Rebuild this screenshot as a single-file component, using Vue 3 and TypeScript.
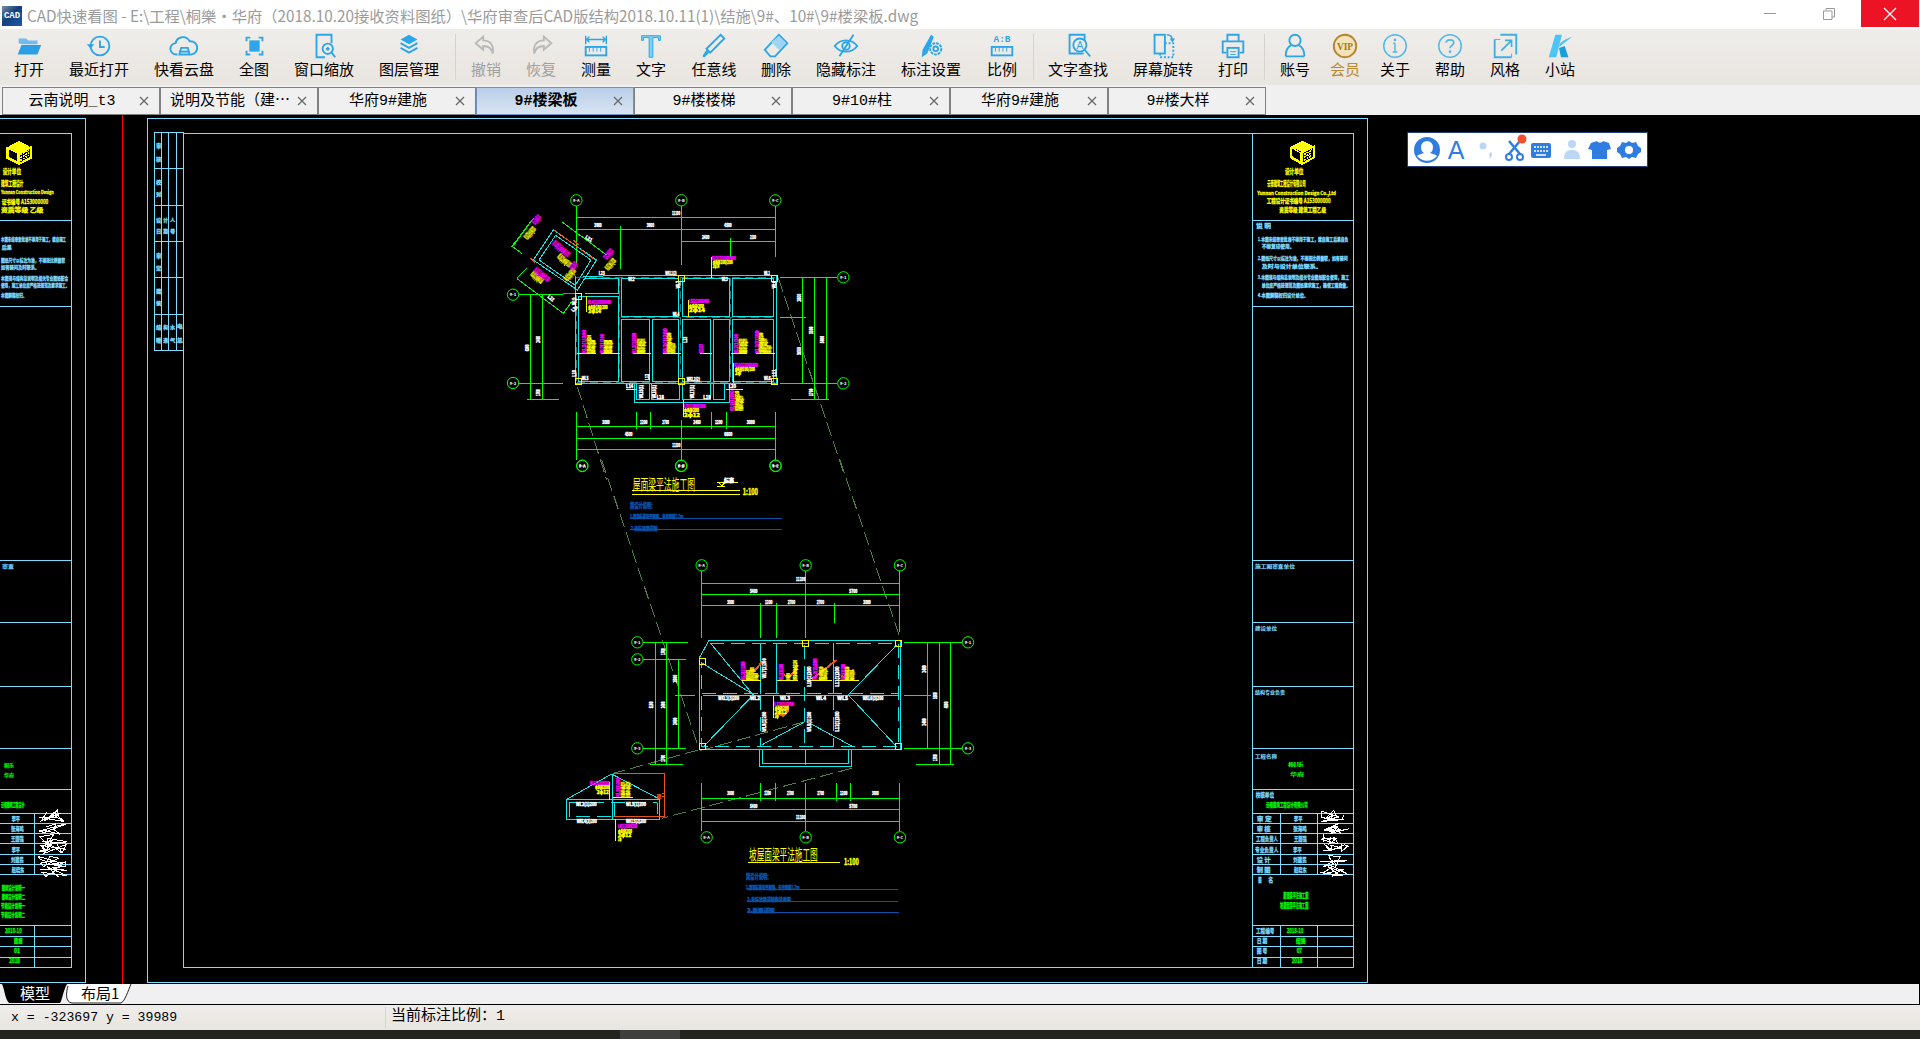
<script setup lang="ts">
import { computed } from 'vue'

const A = '#2ba6e8'
const S = `fill="none" stroke="${A}" stroke-width="2"`
const GY = '#b9b9b9'
const icons: Record<string, string> = {
  open: `<path d="M5 13V8h8l2 2h10v4H9z" fill="#6fbdf0"/><path d="M4 25l4-10h21l-4 10z" fill="#2b9fe6"/>`,
  recent: `<circle cx="17" cy="16" r="10" ${S}/><path d="M17 10v7h5" ${S}/><path d="M3 14h8l-4 5z" fill="${A}"/>`,
  cloud: `<path d="M9 25h-1a6 6 0 0 1-1-12 8 8 0 0 1 15-2 7 7 0 0 1 2 14h-1" ${S}/><path d="M11 25l2-7h7l2 7z" ${S}/><path d="M11 22h11" ${S}/>`,
  full: `<rect x="11" y="10" width="11" height="12" fill="${A}"/><path d="M8 11V7h4M21 7h4v4M25 21v4h-4M12 25H8v-4" ${S}/>`,
  zoom: `<path d="M24 13V4H8v24h9" ${S}/><circle cx="20" cy="19" r="5.500" ${S}/><path d="M24 23l4 5M18 19h4M20 17v4" ${S}/>`,
  layer: `<path d="M16 4l9 5-9 5-9-5z" fill="${A}"/><path d="M7 13l9 5 9-5M7 18l9 5 9-5" ${S} stroke-width="2.500"/>`,
  undo: `<path d="M13 6L5 13l8 7v-4c6 0 9 2 10 8 2-9-3-14-10-14z" fill="none" stroke="${GY}" stroke-width="2"/>`,
  redo: `<path d="M19 6l8 7-8 7v-4c-6 0-9 2-10 8-2-9 3-14 10-14z" fill="none" stroke="${GY}" stroke-width="2"/>`,
  measure: `<path d="M5 5v9M27 5v9M6 9h20M9 6l-3 3 3 3M23 6l3 3-3 3" fill="none" stroke="${A}" stroke-width="1.500"/><rect x="5" y="17" width="22" height="9" ${S}/><path d="M9 18v4M13 18v4M17 18v4M21 18v4" stroke="${A}"/>`,
  text: `<path d="M6 5h20v5h-2V7h-6v21h-4V7H8v3H6z" fill="#7cd0f5" stroke="${A}"/>`,
  pencil: `<path d="M23 4l4 4-15 15-4-4z" fill="none" stroke="${A}" stroke-width="2"/><path d="M8 20l3 3-5 5c-2 0-2-1-2-2z" fill="${A}"/>`,
  eraser: `<path d="M19 4l9 9-13 14H10L4 20z" ${S}/><path d="M19 5l8 8-8 7-8-8z" fill="#9fd4f2"/>`,
  eye: `<path d="M4 16c6-8 18-8 24 0-6 8-18 8-24 0z" ${S}/><circle cx="16" cy="16" r="4" ${S}/><path d="M24 4L9 27" ${S}/>`,
  mark: `<path d="M16 4l3 2-7 18-6 4 1-8z" fill="${A}"/><circle cx="21" cy="19" r="6" ${S} stroke-dasharray="3 1"/><circle cx="21" cy="19" r="2.500" ${S} stroke-width="1.500"/>`,
  ratio: `<text x="16" y="12" text-anchor="middle" font-family="Liberation Mono" font-weight="700" font-size="10" fill="${A}">A:B</text><rect x="5" y="17" width="22" height="9" ${S}/><path d="M9 18v4M13 18v4M17 18v4M21 18v4" stroke="${A}"/>`,
  find: `<path d="M22 24H7V4h16v8" ${S}/><circle cx="18" cy="15" r="7" fill="#eeece8" stroke="${A}" stroke-width="2"/><text x="18" y="19" text-anchor="middle" font-family="Liberation Sans" font-size="11" fill="${A}">A</text><path d="M23 20l6 7" ${S}/>`,
  rotate: `<rect x="7" y="4" width="11" height="20" ${S}/><path d="M18 13h9v15H13v-4" fill="none" stroke="${A}" stroke-width="2" stroke-dasharray="2 2"/><path d="M20 4c4 0 6 2 6 6M24 8l2 3 2-3" fill="none" stroke="${A}" stroke-width="1.500"/>`,
  print: `<path d="M10 11V4h12v7" ${S}/><path d="M9 23H5V11h22v12h-4" ${S} stroke-width="2.500"/><rect x="10" y="18" width="12" height="10" ${S}/><path d="M13 22h6M13 25h6" stroke="${A}"/>`,
  user: `<circle cx="16" cy="10" r="6" ${S}/><path d="M6 27c0-8 4-11 6-12M26 27c0-8-4-11-6-12M6 27h20" ${S}/>`,
  vip: `<circle cx="16" cy="16" r="12" fill="#f3e3b8" stroke="#b5862d" stroke-width="2"/><text x="16" y="20" text-anchor="middle" font-family="Liberation Serif" font-weight="700" font-size="10" fill="#a8741f">VIP</text>`,
  info: `<circle cx="16" cy="16" r="12" fill="none" stroke="#55b8e6" stroke-width="1.600"/><path d="M16 13v9M13.500 22.500h5M14 13h2" stroke="#55b8e6" stroke-width="1.600"/><circle cx="16" cy="9.500" r="1.400" fill="#55b8e6"/>`,
  help: `<circle cx="16" cy="16" r="12" fill="none" stroke="#55b8e6" stroke-width="1.600"/><path d="M12 12.500c0-4 8-4 8 0 0 3-4 3-4 6" fill="none" stroke="#55b8e6" stroke-width="1.800"/><circle cx="16" cy="22" r="1.400" fill="#55b8e6"/>`,
  style: `<path d="M11 4h17v21M5 9v19h18" fill="none" stroke="#3fb0e4" stroke-width="2"/><path d="M5 9h6M23 28v-4" stroke="#3fb0e4"/><path d="M12 21l11-11M16 10h7v7" fill="none" stroke="#3fb0e4" stroke-width="1.800"/>`,
  k: `<path d="M11 4h7L12 28H4z" fill="#4cc4f5"/><path d="M15 17L29 6c-5 2-9 3-13 7z" fill="#4cc4f5"/><path d="M15 18l6-2 4 12h-8z" fill="#1a9fdc"/>`,
}

type Entry = { label?: string; c: number; icon?: string; cls?: string; sep?: boolean }
const entries: Entry[] = [
  { label: '打开', c: 29, icon: 'open' }, { label: '最近打开', c: 99, icon: 'recent' },
  { label: '快看云盘', c: 184, icon: 'cloud' }, { label: '全图', c: 254, icon: 'full' },
  { label: '窗口缩放', c: 324, icon: 'zoom' }, { label: '图层管理', c: 409, icon: 'layer' },
  { c: 455, sep: true },
  { label: '撤销', c: 486, icon: 'undo', cls: 'off' }, { label: '恢复', c: 541, icon: 'redo', cls: 'off' },
  { label: '测量', c: 596, icon: 'measure' }, { label: '文字', c: 651, icon: 'text' },
  { label: '任意线', c: 714, icon: 'pencil' }, { label: '删除', c: 776, icon: 'eraser' },
  { label: '隐藏标注', c: 846, icon: 'eye' }, { label: '标注设置', c: 931, icon: 'mark' },
  { label: '比例', c: 1002, icon: 'ratio' },
  { c: 1033, sep: true },
  { label: '文字查找', c: 1078, icon: 'find' }, { label: '屏幕旋转', c: 1163, icon: 'rotate' },
  { label: '打印', c: 1233, icon: 'print' },
  { c: 1264, sep: true },
  { label: '账号', c: 1295, icon: 'user' }, { label: '会员', c: 1345, icon: 'vip', cls: 'gold' },
  { label: '关于', c: 1395, icon: 'info' }, { label: '帮助', c: 1450, icon: 'help' },
  { label: '风格', c: 1505, icon: 'style' }, { label: '小站', c: 1560, icon: 'k' },
]
const toolbar = computed(() => {
  let cur = 0
  return entries.map((e) => {
    const w = e.sep ? 1 : Math.max(32, (e.label as string).length * 15)
    const ml = e.c - w / 2 - cur
    cur = e.c + w / 2
    return { ...e, svg: e.icon ? icons[e.icon] : '', box: { width: w + 'px', marginLeft: ml + 'px' } }
  })
})

const tabs = ['云南说明_t3', '说明及节能（建⋯', '华府9#建施', '9#楼梁板', '9#楼楼梯', '9#10#柱', '华府9#建施', '9#楼大样']

const G = '#00ff00', C = '#14e6e6', W = '#ffffff', Y = '#ffff00', M = '#ff00ff', B = '#0a52a8', F = '#7fdcff', O = '#e8561a', D = '#4f7f45'

type Lab = [number, number, number, string, string, number?, number?]
type P = { c: string; d: string; w?: number; dash?: string }
type Group = { t: string; paths: P[]; labs: Lab[]; bub?: [number, number, string][]; sq?: [number, number][]; heavy: number }

function cluster(base: number, items: [number, number, string][], size = 15): Lab[] {
  return items.map(([x, l, c]) => [x, base, l, c === M ? 'KL2(1)200' : 'HRB400φ8@200', c, size, -90] as Lab)
}

const plan1: Group = {
  t: 'translate(490 180) scale(.33333)',
  heavy: 1.5,
  paths: [
    { c: D, dash: '14 5', d: 'M262 620L350 900M865 295L1065 890' },
    { c: G, d: 'M259 78V250M574 78V255M856 78V232M259 112H856M259 148H856M574 184H856M391 138V268M721 174V235M88 343H218M88 610H218M122 343V660M157 343V660M110 660H207M870 292H1042M870 610H1042M870 412H947M937 292V610M973 292V660M1009 292V660M903 660H1017M259 695V840M574 720V840M856 695V840M259 740H856M259 775H856M259 808H856M439 695V748M481 695V748M664 695V748M709 695V748M130 115L68 200L95 220M215 125L350 225M80 295L110 265M80 295L220 400L245 365M130 115L65 200' },
    { c: C, d: 'M256 288V612H860V288H340L280 290M266 350H386V605H266ZM285 295H386V340H285M395 295H567V410H395ZM395 418H480V605H395ZM487 418H567V605H487ZM577 297H718V410H577ZM577 418H662V605H577ZM670 418H718V605H670ZM727 295H852V410H727ZM727 418H852V605H727ZM433 612V667H718V612M440 612V658H478V612M485 612V658H570V612M577 612V658H662V612M670 612V658H705V612M190 150L320 240L262 330L130 240ZM197 166L303 240L256 316L147 240Z' },
    { c: '#3f6f6f', dash: '8 5', d: 'M261 345V610M390 295V610M572 295V610M722 295V610M258 292H856M393 414H856M260 608H856' },
    { c: O, d: 'M190 148L318 242M218 340H258M250 180L266 195M122 235L136 248' },
    { c: Y, d: 'M664 232V295M290 347V397M595 360V412M730 548V608M580 660V712M262 520H318M332 520H390M430 520H482M520 520H572M630 520H665M724 520H772M798 520H856M708 630H758M408 630H440' },
  ],
  sq: [[265, 349], [574, 295], [853, 295], [265, 604], [574, 604], [853, 604]],
  bub: [[259, 61, '9-A'], [574, 61, '9-B'], [856, 61, '9-C'], [277, 857, '9-A'], [574, 857, '9-B'], [856, 857, '9-C'], [69, 344, '9-1'], [69, 609, '9-2'], [1060, 292, '9-1'], [1060, 610, '9-2']],
  labs: [
    [546, 106, 24, '11100', W], [313, 141, 22, '3900', W], [470, 141, 22, '3900', W], [703, 141, 22, '4500', W], [636, 176, 22, '2400', W], [780, 176, 18, '2100', W],
    [934, 365, 24, '1800', W, 15, -90], [968, 462, 22, '3300', W, 15, -90], [1002, 490, 22, '5400', W, 15, -90], [933, 525, 24, '3600', W, 15, -90], [968, 648, 22, '1700', W, 15, -90],
    [150, 488, 20, '2400', W, 15, -90], [116, 514, 20, '6300', W, 15, -90], [150, 648, 20, '1700', W, 15, -90],
    [337, 733, 22, '3000', W], [450, 733, 22, '1200', W], [517, 733, 20, '2700', W], [610, 733, 22, '2400', W], [675, 733, 22, '1200', W], [770, 733, 24, '3000', W], [405, 768, 22, '4500', W], [703, 768, 24, '6600', W], [547, 802, 24, '11100', W],
    [526, 285, 34, 'WKL1(2)', W], [822, 285, 18, 'WL1', W], [415, 304, 18, 'WL2', W], [695, 304, 18, 'WL3', W], [548, 407, 20, 'WL4', W], [590, 602, 40, 'WKL2(2)', W], [275, 600, 20, 'WL5', W], [822, 600, 20, 'WL6', W], [570, 325, 22, 'WL7', W, 15, -90], [858, 325, 22, 'WL8', W, 15, -90], [258, 375, 22, 'WL9', W, 15, -90], [258, 590, 20, 'L10', W, 15, -90], [858, 590, 22, 'L11', W, 15, -90], [478, 600, 18, 'L12', W, 15, -90], [590, 488, 18, 'L13', W, 15, -90],
    [408, 625, 22, 'L14', W], [460, 655, 40, 'WL15(1)', W, 15, -90], [498, 655, 40, 'WL16(1)', W, 15, -90], [612, 655, 40, 'WL17(1)', W, 15, -90], [500, 656, 22, 'L18', W], [640, 656, 22, 'L19', W], [716, 625, 22, 'L20', W], [284, 175, 22, 'L21', W, 15, 30], [172, 352, 20, 'L22', W, 15, 40], [326, 285, 18, 'L23', W], [250, 397, 20, 'L24', W, 15, -45],
    [665, 240, 72, 'KL3(2)200X400', M], [668, 252, 60, 'φ8@100/200', Y], [668, 265, 20, '2φ14', Y],
    [293, 372, 70, 'KL4(1)200X400', M], [295, 386, 58, 'φ8@100/200', Y], [295, 400, 38, '2φ14', Y],
    [597, 370, 60, 'L5(2)200X400', M], [597, 383, 45, 'φ8@200', Y], [597, 397, 48, '2φ14', Y],
    [733, 560, 70, 'KL6(1)200X400', M], [735, 572, 60, 'φ8@100/200', Y], [735, 585, 18, '2φ', Y],
    [582, 685, 65, 'L7(1)200X300', M], [582, 697, 45, 'φ8@200', Y], [582, 710, 48, '2φ12', Y],
    ...cluster(520, [[288, 70, M], [302, 55, Y], [314, 40, Y]]), ...cluster(520, [[342, 58, M], [355, 40, Y], [367, 40, Y]]), ...cluster(520, [[439, 62, M], [452, 45, Y], [464, 45, Y]]), ...cluster(520, [[530, 75, M], [542, 62, Y], [554, 30, Y]]), ...cluster(520, [[640, 28, M]]), ...cluster(520, [[745, 58, M], [760, 45, Y], [770, 45, Y]]), ...cluster(520, [[808, 68, M], [820, 62, Y], [832, 45, Y], [844, 25, Y]]),
    ...cluster(692, [[733, 60, M], [747, 60, Y], [758, 45, Y]]),
    ...([[135, 135, M, 30, -50], [112, 180, Y, 42, -50], [185, 192, M, 62, 40], [200, 232, Y, 48, 40], [120, 285, Y, 42, 40], [130, 272, M, 55, 40], [232, 305, Y, 42, -50], [248, 272, M, 26, -50], [355, 272, Y, 38, -50], [350, 240, M, 34, -50]] as [number, number, string, number, number][]).map(([x, y, c, l, r]) => [x, y, l, 'KL8(2)φ8@100', c, 22, r] as Lab),
  ],
}

const plan2: Group = {
  t: 'translate(550 460) scale(.33333)',
  heavy: 1.5,
  paths: [
    { c: D, dash: '14 5', d: 'M155 0L445 860M870 0L1052 540M445 870L190 940M765 785L450 872M905 925L335 1075' },
    { c: G, d: 'M454 333V535M767 333V535M1050 333V515M454 370H1050M454 403H1050M454 438H1050M631 430V535M679 430V535M853 430V488M280 547H414M280 598H408M280 865H408M316 547V915M350 547V915M385 598V865M300 915H398M375 706H436M1062 547H1236M1062 865H1236M1062 706H1142M1132 547V865M1168 547V915M1202 547V915M1098 915H1212M454 968V1114M767 968V1114M1050 968V1114M454 1015H1050M454 1048H1050M454 1084H1050M631 968V1022M676 968V1022M859 968V1022M901 968V1022' },
    { c: C, d: 'M476 543H1052V868H450V590ZM630 868V920H905V868M638 868V912H897V868M767 868V915M680 550V702M632 550V702M852 550V702M458 707H1045M50 1018L185 942L330 1018V1078H50ZM50 1018H330M188 942V1078' },
    { c: C, dash: '14 7', d: 'M480 550H1046V860H456V605M456 700H1046M632 708V860M764 556V860M852 708V860M58 1028V1070H322V1028M58 1028H322M195 1030V1070' },
    { c: C, d: 'M482 550L610 705M457 610L605 700M1040 555L895 705M460 860L605 710M1040 860L895 705M635 855L765 785M780 790L905 858' },
    { c: O, w: 6, d: 'M600 628L615 632L636 605M702 645L718 652L742 625M785 658L860 600M875 648L892 655L910 628M685 760L700 768L716 750' },
    { c: O, d: 'M190 942H345V1070H190M335 1000H345M335 1010H345' },
    { c: Y, d: 'M247 93H570M594 1207H870M247 103H570M576 661H632M682 661H745M770 661H845M860 661H928M670 708V775M180 965V1020M190 1012H250M198 1078V1142M502 67H563M505 67L515 78L525 67M500 80H525' },
    { c: B, d: 'M240 175H695M240 210H695M590 1288H1045M592 1324H1045M592 1357H1047' },
  ],
  sq: [[457, 604], [766, 550], [1045, 550], [457, 860], [1045, 860]],
  bub: [[97, 18, '9-A'], [393, 18, '9-B'], [677, 18, '9-C'], [455, 316, '9-A'], [767, 316, '9-B'], [1050, 316, '9-C'], [470, 1132, '9-A'], [767, 1132, '9-B'], [1050, 1132, '9-C'], [262, 547, '9-1'], [262, 598, '9-2'], [262, 865, '9-3'], [1254, 547, '9-1'], [1254, 865, '9-3']],
  labs: [
    [578, 104, 46, '1:100', Y, 26], [882, 1216, 44, '1:100', Y, 26], [522, 66, 30, '标高', W, 14],
    [240, 145, 76, '梁设计说明：', B, 22], [240, 174, 160, '1.梁顶标高见平面图，未注明者7.7m', B, 15], [242, 209, 80, '2.未标注梁详图', B, 15],
    [588, 1258, 76, '梁设计说明：', B, 22], [588, 1287, 160, '1.梁顶标高见平面图，未注明者7.7m', B, 15], [592, 1322, 130, '2.未标注梁详结构总说明', B, 15], [592, 1356, 82, '3.板厚详图', B, 15],
    [738, 362, 28, '11100', W], [600, 398, 22, '5400', W], [898, 398, 24, '5700', W], [532, 433, 20, '3000', W], [645, 433, 22, '1200', W], [713, 433, 22, '2700', W], [800, 433, 22, '2700', W], [940, 433, 22, '3000', W],
    [532, 1006, 20, '3000', W], [643, 1006, 20, '1200', W], [711, 1006, 20, '2700', W], [802, 1006, 20, '2700', W], [870, 1006, 22, '1200', W], [966, 1006, 20, '3000', W], [600, 1043, 22, '5400', W], [898, 1043, 24, '5700', W], [738, 1078, 28, '11100', W],
    [344, 585, 20, '1700', W, 15, -90], [344, 745, 20, '2400', W, 15, -90], [344, 905, 20, '1700', W, 15, -90], [310, 745, 20, '5100', W, 15, -90], [380, 668, 24, '1500', W, 15, -90], [380, 795, 22, '2400', W, 15, -90],
    [1127, 638, 22, '2400', W, 15, -90], [1127, 797, 22, '2400', W, 15, -90], [1160, 717, 20, '3300', W, 15, -90], [1195, 745, 20, '4800', W, 15, -90], [1160, 903, 20, '1700', W, 15, -90],
    [505, 720, 62, 'WKL1(3)200', W], [600, 720, 30, 'WL2', W], [690, 720, 30, 'WL3', W], [798, 720, 30, 'WL4', W], [862, 720, 32, 'WL5', W], [938, 720, 62, 'WKL6(3)200', W],
    [648, 655, 60, 'WL7(1)200', W, 15, -90], [648, 815, 60, 'WL8(1)200', W, 15, -90], [782, 815, 60, 'WL9(1)200', W, 15, -90], [782, 680, 60, 'L10(1)200', W, 15, -90], [868, 680, 60, 'L11(1)200', W, 15, -90], [868, 815, 60, 'L12(1)200', W, 15, -90],
    [672, 738, 60, 'L13(1)200', M], [674, 750, 42, 'φ8@200', Y], [674, 762, 36, '2φ12', Y], [674, 775, 12, '2φ', Y],
    ...cluster(660, [[586, 55, M], [600, 30, Y], [612, 38, Y], [624, 20, Y]]), ...cluster(660, [[700, 48, M], [720, 20, Y], [740, 60, Y]]), ...cluster(660, [[800, 65, M], [818, 40, Y], [832, 35, Y]]), ...cluster(660, [[884, 48, M], [898, 40, Y], [912, 30, Y]]),
    [120, 975, 58, 'WL1(1)200X300', M], [135, 988, 42, 'φ8@200', Y], [140, 1001, 36, '2φ12', Y], ...cluster(1010, [[210, 58, M], [225, 45, Y], [240, 45, Y]]),
    [78, 1038, 62, 'WL2(1)200', W], [228, 1038, 60, 'WL3(1)200', W], [80, 1090, 60, 'WKL4(2)200', W], [228, 1090, 60, 'WKL5(2)200', W],
    [204, 1105, 58, 'L6(1)200X300', M], [204, 1118, 42, 'φ8@200', Y], [204, 1131, 40, '2φ12', Y], [204, 1144, 10, '2φ', Y],
    [332, 1018, 16, '900', O, 14, -90],
  ],
}

const F14 = 14
const rows = (pre: [number, number, number, string, string, number?][]) => pre.map((r) => [r[0], r[1], r[2], r[3], r[4], r[5] ?? F14] as Lab)

const tbRight: Group = {
  t: 'translate(1240 120) scale(.33333)', paths: [], heavy: 0.8,
  labs: rows([
    [135, 162, 55, '设计单位', Y, 21], [82, 197, 115, '云南建筑工程设计有限公司', Y, 22], [52, 224, 236, 'Yunnan Construction Design Co.,Ltd', Y, 14], [80, 250, 192, '工程设计证书编号 A153000000', Y, 18], [118, 275, 140, '资质等级 建筑工程乙级', Y, 18],
    [48, 325, 45, '说  明', F, 18], [53, 362, 272, '1.本图未经审查批准不得用于施工，擅自施工后果自负', F], [65, 385, 98, '不得复印使用。', F], [53, 420, 270, '2.图纸尺寸以标注为准，不得按比例量取，如有疑问', F], [65, 445, 180, '及时与设计单位联系。', F], [53, 478, 274, '3.本图须与结构总说明及相关专业图纸配合使用，施工', F], [65, 500, 265, '单位应严格按规范及图纸要求施工，确保工程质量。', F], [53, 530, 152, '4.本图解释权归设计单位。', F],
  ]),
}
const tbRight2: Group = {
  t: 'translate(1240 780) scale(.33333)', paths: [], heavy: 0.8,
  labs: rows([
    [47, 50, 55, '校核单位', F, 18], [78, 80, 125, '云南建筑工程设计有限公司', G, 18],
    [50, 122, 45, '审 定', F, 18], [50, 152, 42, '审 核', F, 18], [48, 182, 66, '工程负责人', F, 18], [45, 215, 70, '专业负责人', F, 18], [50, 245, 42, '设 计', F, 18], [50, 275, 42, '制 图', F, 18],
    [162, 122, 25, '李平', F, 18], [160, 152, 40, '张海鸣', F, 18], [162, 182, 38, '王国强', F, 18], [160, 215, 25, '李平', F, 18], [160, 245, 40, '刘建民', F, 18], [162, 275, 38, '赵晓东', F, 18],
    [55, 305, 10, '图', F, 18], [85, 305, 15, '名', F, 18], [130, 355, 75, '屋面梁平法施工图', G, 20], [120, 385, 85, '坡屋面梁平法施工图', G, 20],
    [48, 460, 55, '工程编号', F, 18], [140, 460, 50, '2018-10', G, 18], [50, 490, 32, '日 期', F, 18], [168, 490, 28, '结施', G, 18], [50, 520, 32, '图 号', F, 18], [170, 520, 16, '07', G, 18], [50, 550, 32, '日 期', F, 18], [155, 550, 32, '2018', G, 18],
  ]),
}
const tbLeft: Group = {
  t: 'translate(0 115) scale(.33333)', paths: [], heavy: 0.8,
  labs: rows([
    [8, 177, 55, '设计单位', Y, 21], [3, 212, 67, '建筑工程设计', Y, 22], [3, 238, 158, 'Yunnan Construction Design', Y, 14], [5, 266, 140, '证书编号 A153000000', Y, 18], [3, 292, 127, '资质等级 乙级', Y, 18],
    [3, 378, 195, '本图未经审查批准不得用于施工，擅自施工', F], [5, 402, 30, '后果', F], [3, 440, 192, '图纸尺寸以标注为准，不得按比例量取', F], [3, 462, 115, '如有疑问及时联系。', F], [3, 494, 202, '本图须与结构总说明及相关专业图纸配合', F], [3, 516, 205, '使用，施工单位应严格按规范及要求施工。', F], [3, 546, 77, '本图解释权归。', F],
    [468, 100, 16, '审', F, 16], [468, 137, 16, '核', F, 14], [468, 206, 16, '校', F, 14], [468, 244, 16, '对', F, 14], [468, 320, 16, '设', F, 14], [490, 320, 14, '计', F, 14], [510, 318, 16, '人', F, 14], [468, 355, 16, '日', F, 14], [490, 355, 14, '期', F, 14], [510, 353, 16, '号', F, 14], [468, 428, 16, '审', F, 16], [468, 465, 16, '定', F, 14], [468, 533, 16, '建', F, 14], [468, 570, 16, '筑', F, 14], [468, 643, 16, '结', F, 14], [490, 643, 14, '构', F, 14], [510, 643, 16, '水', F, 14], [530, 638, 18, '电', F, 14], [468, 681, 16, '暖', F, 14], [490, 681, 14, '通', F, 14], [510, 681, 16, '气', F, 14], [530, 680, 18, '总', F, 14],
  ]),
}
const tbLeft2: Group = {
  t: 'translate(0 780) scale(.33333)', paths: [], heavy: 0.8,
  labs: rows([
    [3, 80, 70, '云南建筑工程设计', G, 18], [35, 122, 25, '李平', F, 18], [33, 152, 38, '张海鸣', F, 18], [33, 182, 38, '王国强', F, 18], [35, 215, 25, '李平', F, 18], [33, 245, 38, '刘建民', F, 18], [35, 275, 38, '赵晓东', F, 18],
    [5, 330, 70, '建筑设计说明一', G, 18], [5, 358, 70, '建筑设计说明二', G, 18], [3, 385, 72, '节能设计说明一', G, 18], [3, 412, 72, '节能设计说明二', G, 18],
    [15, 460, 50, '2018-10', G, 18], [42, 490, 25, '建施', G, 18], [42, 520, 18, '01', G, 18], [28, 550, 32, '2018', G, 18],
  ]),
}
const tbPage: Group = {
  t: 'translate(0 0)', paths: [], heavy: 0.1,
  labs: [
    [1255, 568, 40, '施工图审查单位', F, 5], [1255, 630, 22, '建设单位', F, 5], [1255, 694, 30, '结构专业负责', F, 5], [1255, 758, 22, '工程名称', F, 5], [1288, 766, 16, '桐乐', G, 5], [1290, 776, 14, '华府', G, 5],
    [2, 568, 12, '审查', F, 5], [4, 767, 10, '桐乐', G, 5], [4, 777, 10, '华府', G, 5],
  ],
}
const groups: Group[] = [plan1, plan2, tbRight, tbRight2, tbLeft, tbLeft2, tbPage]

function scribble(x: number, y: number, w: number, h: number, seed: number): string {
  const pts: string[] = []
  for (let i = 0; i < 13; i++) {
    const a = Math.abs(Math.sin(seed * 12.9 + i * 78.2) * 43758.5) % 1
    const b = Math.abs(Math.sin(seed * 39.3 + i * 11.7) * 24634.6) % 1
    pts.push((i ? 'L' : 'M') + (x + a * w).toFixed(1) + ' ' + (y + b * h).toFixed(1))
  }
  return pts.join('')
}
const scribbles = computed(() => {
  let s = ''
  ;[810, 823, 834, 843, 855, 866].forEach((y, i) => {
    s += scribble(1320, y, 30, 12, i + 1) + scribble(38, y, 30, 12, i + 9)
  })
  return s
})

// title-block rules: horizontal rows shared by the left and right sheets
const ruleYs = [220, 306, 560, 622, 686, 748, 789]
const tableYs = [813, 823, 833, 843, 854, 864, 874, 925, 936, 946, 957]
const frames = computed(() => {
  let d = 'M0 118H85V982H0M0 133H71V967H0M147 118H1367V982H147ZM183 133H1353V967H183ZM154 132H183V350H154ZM161 132V350M168 132V350M176 132V350M154 168H183M154 205H183M154 241H183M154 277H183M154 314H183M1252 133V967M1280 813V874M1317 813V874M1280 925V967M1317 925V967M34 813V874M34 925V967'
  for (const y of ruleYs) d += `M1252 ${y}H1353M0 ${y}H71`
  for (const y of tableYs) d += `M1252 ${y}H1353M0 ${y}H71`
  return d
})
const rot = (l: Lab) => (l[6] ? `rotate(${l[6]} ${l[0]} ${l[1]})` : undefined)
const bubbleLen = 20
</script>

<template>
  <div class="app">
    <header class="titlebar">
      <div class="appicon">CAD</div>
      <div class="title">CAD快速看图 - E:\工程\桐樂·华府（2018.10.20接收资料图纸）\华府审查后CAD版结构2018.10.11(1)\结施\9#、10#\9#楼梁板.dwg</div>
      <div class="winbtns">
        <span class="min"></span>
        <svg class="restore" width="12" height="12" viewBox="0 0 12 12"><path d="M3 2.500V.5h8.500V9H9M.5 3H9v8.500H.5z" fill="none" stroke="#999"/></svg>
        <div class="close"><svg width="14" height="14" viewBox="0 0 14 14"><path d="M1 1l12 12M13 1L1 13" stroke="#fff" stroke-width="1.300"/></svg></div>
      </div>
    </header>

    <nav class="toolbar">
      <template v-for="(e, i) in toolbar" :key="i">
        <div v-if="e.sep" class="sep" :style="e.box"></div>
        <div v-else class="tool" :class="e.cls" :style="e.box">
          <svg class="ticon" viewBox="0 0 32 32" width="30" height="30" v-html="e.svg"></svg>
          <span class="tlabel">{{ e.label }}</span>
        </div>
      </template>
    </nav>

    <div class="tabs">
      <div v-for="(t, i) in tabs" :key="i" class="tab" :class="{ active: i === 3 }">
        <span class="tabtext">{{ t }}</span>
        <svg class="tabx" width="10" height="10" viewBox="0 0 10 10"><path d="M1 1l8 8M9 1L1 9" stroke="#666" stroke-width="1.200"/></svg>
      </div>
    </div>

    <main class="canvas">
      <svg class="drawing" viewBox="0 115 1920 869" width="1920" height="869" shape-rendering="crispEdges">
        <path :d="frames" fill="none" :stroke="F" stroke-width="1" />
        <path d="M122.500 115V984" stroke="#ff0000" stroke-width="1.500" fill="none" />
        <path :d="scribbles" fill="none" stroke="#fff" stroke-width="1" />

        <g transform="translate(1240 120) scale(.33333)">
          <path d="M152 80L187 62L222 80L187 97Z" :fill="Y" />
          <path d="M152 80V112L187 132L222 112V80L187 97V132" fill="none" :stroke="Y" stroke-width="2" vector-effect="non-scaling-stroke" />
          <path d="M156 84V110L183 126V99Z" fill="none" :stroke="Y" stroke-width="1" vector-effect="non-scaling-stroke" />
          <path d="M192 112L216 98M192 120L216 106M192 104L216 90" :stroke="Y" stroke-width="1.500" stroke-dasharray="2 1" vector-effect="non-scaling-stroke" />
        </g>
        <g transform="translate(-1 115) scale(.33333)">
          <path d="M24 97L60 78L96 97L60 115Z" :fill="Y" />
          <path d="M24 97V128L60 147L96 128V97L60 115V147" fill="none" :stroke="Y" stroke-width="2" vector-effect="non-scaling-stroke" />
          <path d="M28 101V126L55 141V115Z" fill="none" :stroke="Y" stroke-width="1" vector-effect="non-scaling-stroke" />
          <path d="M64 128L90 113M64 136L90 121M64 120L90 105" :stroke="Y" stroke-width="1.500" stroke-dasharray="2 1" vector-effect="non-scaling-stroke" />
        </g>

        <g v-for="(g, gi) in groups" :key="gi" :transform="g.t">
          <path v-for="(p, pi) in g.paths" :key="pi" :d="p.d" :stroke="p.c" :stroke-dasharray="p.dash" fill="none" vector-effect="non-scaling-stroke" :stroke-width="(p.w ?? 3) / 3" />
          <rect v-for="(s, si) in g.sq" :key="'s' + si" :x="s[0] - 9" :y="s[1] - 9" width="18" height="18" fill="none" :stroke="Y" stroke-width="3" />
          <g v-for="(b, bi) in g.bub" :key="'b' + bi">
            <circle :cx="b[0]" :cy="b[1]" r="17" fill="none" :stroke="G" stroke-width="3" shape-rendering="auto" />
            <text :x="b[0] - bubbleLen / 2" :y="b[1] + 5" class="cad" font-size="12" :textLength="bubbleLen" lengthAdjust="spacingAndGlyphs" fill="#fff">{{ b[2] }}</text>
          </g>
          <text v-for="(l, li) in g.labs" :key="'l' + li" class="cad" :x="l[0]" :y="l[1]" :textLength="l[2]" lengthAdjust="spacingAndGlyphs" :font-size="l[5] ?? 15" :fill="l[4]" :stroke="l[4]" :stroke-width="g.heavy" :transform="rot(l)">{{ l[3] }}</text>
        </g>

        <text class="cad cadtitle" transform="translate(632.700 489.500) scale(.53 1)" :fill="Y" font-size="14.700">屋面梁平法施工图</text>
        <text class="cad cadtitle" transform="translate(749 860) scale(.52 1)" :fill="Y" font-size="14.700">坡屋面梁平法施工图</text>
      </svg>

      <div class="floatbar">
        <svg width="239" height="33" viewBox="0 0 239 33">
          <circle cx="19" cy="17" r="13" fill="#2f7de1" />
          <path d="M19 8a6 6 0 0 1 6 6c0 3-1 5-3 6 2 1 5 1 7 3a13 13 0 0 1-20 0c2-2 5-2 7-3-2-1-3-3-3-6a6 6 0 0 1 6-6z" fill="#fff" />
          <text x="48" y="26" text-anchor="middle" font-family="Liberation Sans" font-size="25" fill="#2f7de1">A</text>
          <circle cx="75" cy="13" r="3.500" fill="#bcd6f6" />
          <path d="M83 19c2 2 1 6-2 7 1-2 1-4 0-5z" fill="#bcd6f6" />
          <path d="M101 8l11 13M112 8L101 21" stroke="#2f7de1" stroke-width="2.500" />
          <circle cx="101" cy="24" r="3" fill="none" stroke="#2f7de1" stroke-width="2" />
          <circle cx="112" cy="24" r="3" fill="none" stroke="#2f7de1" stroke-width="2" />
          <circle cx="114" cy="6" r="4.500" fill="#f4502e" />
          <rect x="123" y="10" width="20" height="15" rx="2" fill="#2f7de1" />
          <path d="M126 14h14M126 18h14" stroke="#fff" stroke-width="1.600" stroke-dasharray="2 1" />
          <path d="M128 22h10" stroke="#fff" stroke-width="1.500" />
          <circle cx="164" cy="11" r="4" fill="#bcd6f6" />
          <path d="M156 26c0-7 3-9 8-9s8 2 8 9z" fill="#bcd6f6" />
          <path d="M183 10l6-2c1 2 5 2 6 0l6 2 2 6-4 1v9h-15v-9l-4-1z" fill="#2f7de1" />
          <path d="M221 8l3 2 4-1 2 4 3 2v4l-3 2-2 4-4-1-3 2-3-2-4 1-2-4-3-2v-4l3-2 2-4 4 1z" fill="#2f7de1" />
          <circle cx="221" cy="17" r="4" fill="#fff" />
        </svg>
      </div>
    </main>

    <div class="layouts">
      <svg class="layoutshape" width="135" height="20" viewBox="0 0 135 20">
        <path d="M68 0c-2 7-3 18 4 19h49c4-2 7-12 10-19z" fill="#fff" />
        <path d="M68 2c-2 7-3 16 4 17h49c4-2 7-12 10-19" fill="none" stroke="#222" />
        <path d="M2 0H67C63 7 62 17 60 19H9C5 15 5 7 2 0z" fill="#000" />
        <text x="20" y="15" class="ltext" fill="#fff">模型</text>
        <text x="81" y="15" class="ltext" fill="#000">布局1</text>
      </svg>
    </div>

    <footer class="status">
      <span class="coord">x = -323697 y = 39989</span>
      <span class="scale">当前标注比例：1</span>
    </footer>

    <div class="taskbar">
      <div class="taskbtn"></div>
      <div class="clock">15:15</div>
    </div>
  </div>
</template>

<style scoped>
.app {
  width: 1920px;
  height: 1039px;
  display: flex;
  flex-direction: column;
  overflow: hidden;
  background: #000;
  font-family: "Noto Sans CJK SC", "Liberation Sans", sans-serif;
}
.titlebar {
  height: 29px;
  background: #fff;
  display: flex;
  align-items: flex-start;
  flex: none;
}
.appicon {
  width: 20px;
  height: 20px;
  margin: 6px 0 0 2px;
  background: linear-gradient(135deg, #7a8da3, #123f7d 45%, #1c5aa6);
  color: #fff;
  font: 700 9px/20px "Liberation Mono", monospace;
  text-align: center;
  flex: none;
}
.title {
  margin: 4px 0 0 5px;
  font-size: 15.300px;
  line-height: 22px;
  color: #9b9b9b;
  white-space: nowrap;
  width: 930px;
}
.winbtns {
  margin-left: auto;
  display: flex;
  align-items: flex-start;
}
.min {
  width: 12px;
  height: 1px;
  background: #999;
  margin: 13px 47px 0 0;
}
.restore {
  margin: 8px 26px 0 0;
}
.close {
  width: 58px;
  height: 27px;
  margin-right: 1px;
  background: #ec1325;
  display: flex;
  align-items: center;
  justify-content: center;
}
.toolbar {
  height: 56px;
  flex: none;
  display: flex;
  align-items: flex-start;
  background: linear-gradient(#efedea, #e9e5e0);
}
.tool {
  display: flex;
  flex-direction: column;
  align-items: center;
  flex: none;
  padding-top: 2px;
}
.ticon {
  display: block;
}
.tlabel {
  font-size: 15px;
  line-height: 16px;
  color: #000;
  white-space: nowrap;
}
.off .tlabel {
  color: #a0a0a0;
}
.gold .tlabel {
  color: #b98a2f;
}
.sep {
  flex: none;
  height: 46px;
  margin-top: 5px;
  background: #d6d3ce;
}
.tabs {
  height: 30px;
  flex: none;
  box-sizing: border-box;
  padding: 2px 0 0 2px;
  display: flex;
  background: #f0f0f0;
}
.tab {
  width: 158px;
  box-sizing: border-box;
  height: 28px;
  border: 1px solid #808080;
  display: flex;
  align-items: center;
  background: #f0f0f0;
  flex: none;
}
.tab.active {
  background: linear-gradient(#b9cfe9, #d9e4f1);
  border-color: #6f94c0;
}
.tab.active .tabtext {
  font-weight: 700;
}
.tabtext {
  flex: 1;
  text-align: center;
  padding: 1px 0 0 8px;
  font: 15px/18px "Liberation Mono", "Noto Sans CJK SC", monospace;
  color: #000;
  white-space: nowrap;
  overflow: hidden;
}
.tabx {
  margin: 0 10px 0 6px;
  flex: none;
}
.canvas {
  height: 869px;
  flex: none;
  position: relative;
  background: #000;
  overflow: hidden;
}
.drawing {
  display: block;
}
.cad {
  font-family: "Noto Sans CJK SC", "Liberation Sans", sans-serif;
  font-weight: 700;
}
.cadtitle {
  font-weight: 400;
}
.floatbar {
  position: absolute;
  left: 1407px;
  top: 17px;
  width: 241px;
  height: 35px;
  background: #fff;
  border: 1px solid #1d3f7a;
  box-sizing: border-box;
}
.floatbar svg {
  display: block;
}
.layouts {
  height: 20px;
  flex: none;
  background: #f0f0f0;
  margin-right: 1px;
}
.layoutshape {
  display: block;
  overflow: visible;
}
.ltext {
  font-family: "Noto Sans CJK SC", sans-serif;
  font-size: 15px;
}
.status {
  margin-top: 1px;
  height: 25px;
  flex: none;
  display: flex;
  align-items: center;
  background: linear-gradient(#efedea, #e9e5e0);
  position: relative;
}
.coord {
  font: 13.200px/18px "Liberation Mono", monospace;
  color: #000;
  margin-left: 11px;
  padding-top: 1px;
  white-space: pre;
  width: 374px;
  flex: none;
}
.scale {
  font: 15px/20px "Liberation Mono", "Noto Sans CJK SC", monospace;
  color: #000;
  padding-left: 5px;
  border-left: 1px solid #d6d3ce;
  height: 21px;
}
.taskbar {
  height: 9px;
  flex: none;
  background: #24241f;
  display: flex;
  overflow: hidden;
}
.taskbtn {
  width: 60px;
  margin-left: 620px;
  background: #3f3f3d;
}
.clock {
  margin-left: auto;
  margin-right: 34px;
  color: #fff;
  font: 13px/18px "Liberation Sans", sans-serif;
  padding-top: 6px;
}
</style>

<style>
html,
body {
  margin: 0;
  background: #000;
  overflow: hidden;
}
</style>
